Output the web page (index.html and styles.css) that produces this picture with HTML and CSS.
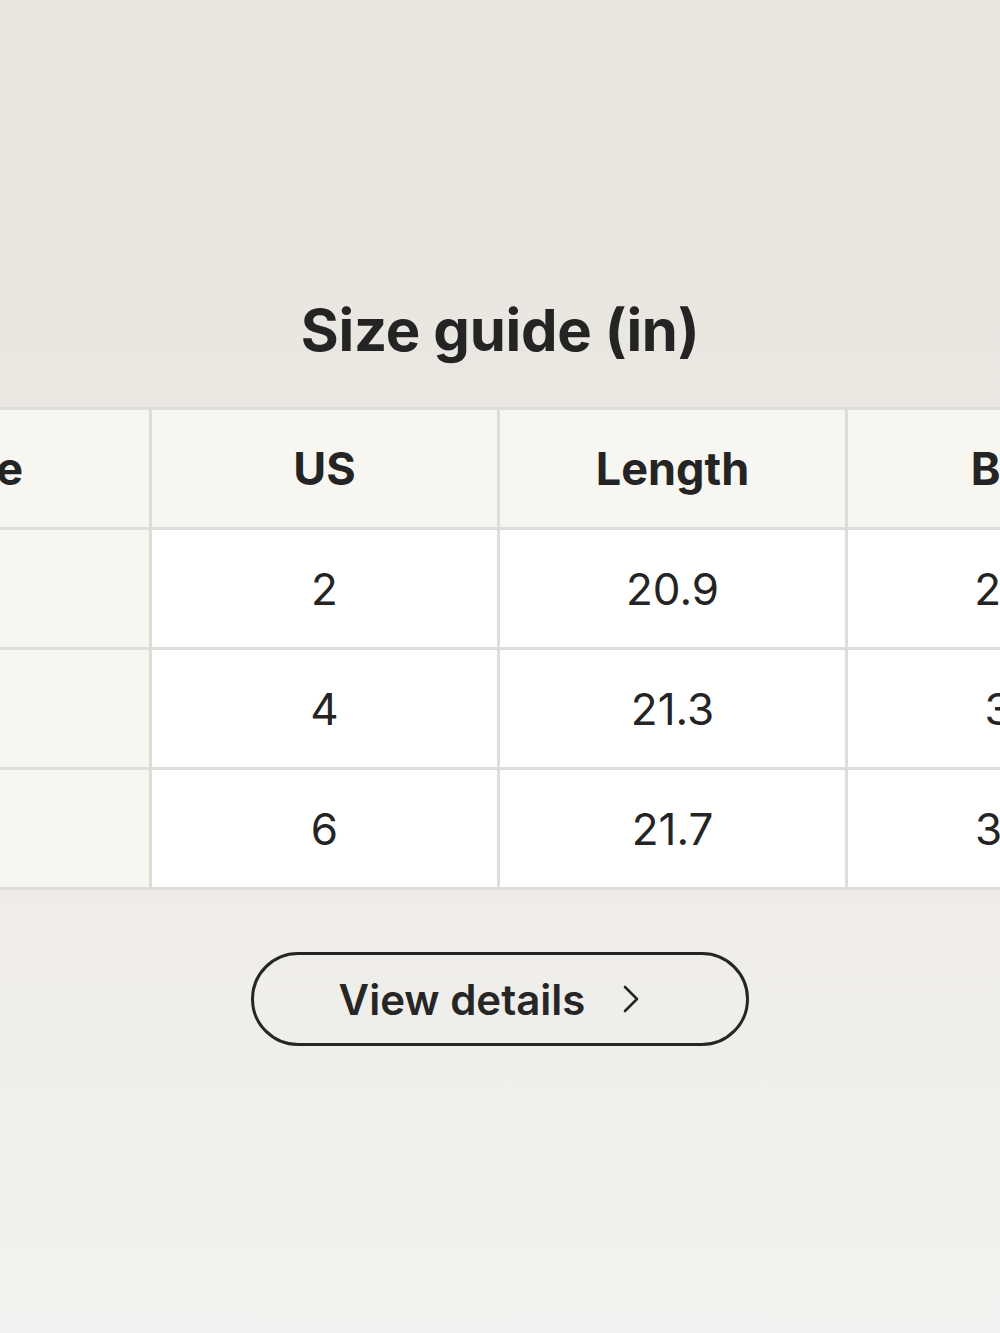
FILE: index.html
```html
<!DOCTYPE html>
<html>
  <head>
    <meta charset="utf-8">
    <title>Size guide</title>
    <link rel="stylesheet" href="styles.css">
  </head>
  <body>
    <main class="sheet">
      <h1 class="title">Size guide (in)</h1>
      <div class="tableWrap">
        <table class="sizeTable">
          <thead>
            <tr>
              <th class="label">Size</th>
              <th>US</th>
              <th>Length</th>
              <th>Bust</th>
              <th>Waist</th>
            </tr>
          </thead>
          <tbody>
            <tr>
              <td class="label"></td>
              <td>2</td>
              <td>20.9</td>
              <td>29.9</td>
              <td>24.4</td>
            </tr>
            <tr>
              <td class="label"></td>
              <td>4</td>
              <td>21.3</td>
              <td>31.1</td>
              <td>25.9</td>
            </tr>
            <tr>
              <td class="label"></td>
              <td>6</td>
              <td>21.7</td>
              <td>32.7</td>
              <td>27.6</td>
            </tr>
          </tbody>
        </table>
      </div>
      <div class="actions">
        <button class="detailsButton">
          <span>View details</span>
          <svg class="chevron" width="20" height="32" viewBox="0 0 20 32" aria-hidden="true">
            <path d="M4 4 L16 16 L4 28" fill="none" stroke="#262626" stroke-width="2.6" stroke-linecap="round" stroke-linejoin="round"/>
          </svg>
        </button>
      </div>
    </main>
  </body>
</html>
```

FILE: styles.css
```css
html, body {
    margin: 0;
    height: 100%;
}
body {
    font-family: Inter, "Noto Sans", sans-serif;
    color: #242424;
    background: linear-gradient(to bottom, #e8e5df 0%, #ebe8e3 40%, #f0eeeb 75%, #f3f2f0 100%);
    overflow: hidden;
}
.sheet {
    padding-top: 290px;
}
.title {
    margin: 0;
    text-align: center;
    font-size: 58px;
    font-weight: 700;
    line-height: 80px;
    letter-spacing: -0.3px;
}
.tableWrap {
    margin-top: 37px;
    overflow: hidden;
}
.sizeTable {
    margin-left: -199px;
    border-collapse: separate;
    border-spacing: 3px;
    background: #dfdddb;
}
.sizeTable th,
.sizeTable td {
    width: 345px;
    min-width: 345px;
    height: 117px;
    padding: 0;
    text-align: center;
    box-sizing: border-box;
}
.sizeTable th {
    background: #f7f6f1;
    font-size: 45px;
    font-weight: 700;
}
.sizeTable td {
    background: #ffffff;
    font-size: 44px;
    font-weight: 400;
}
.sizeTable td.label {
    background: #f7f6f1;
}
.actions {
    display: flex;
    justify-content: center;
    margin-top: 62px;
}
.detailsButton {
    display: flex;
    align-items: center;
    justify-content: center;
    gap: 36px;
    width: 498px;
    height: 94px;
    padding: 0 20px 0 0;
    border: 3px solid #262626;
    border-radius: 47px;
    background: transparent;
    font-family: Inter, "Noto Sans", sans-serif;
    font-size: 42px;
    font-weight: 600;
    color: #262626;
}
.chevron {
    display: block;
}
```
